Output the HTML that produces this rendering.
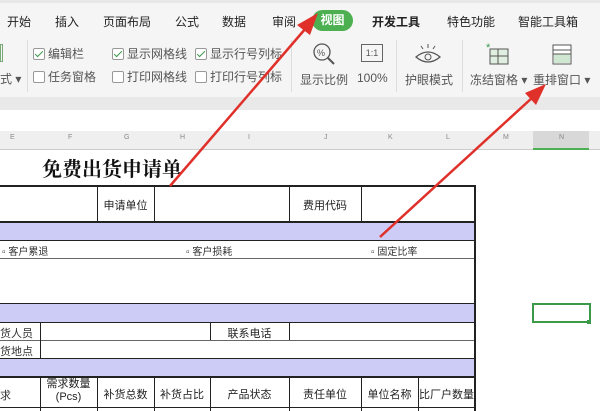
<!DOCTYPE html>
<html><head><meta charset="utf-8"><style>
*{margin:0;padding:0;box-sizing:border-box}
body{width:600px;height:411px;overflow:hidden;background:#fff;position:relative;font-family:"Liberation Sans","Noto Sans CJK SC",sans-serif;color:#333}
.a{position:absolute;white-space:nowrap}
.tab{position:absolute;top:13px;font-size:12px;color:#222}
.r{font-size:12px;color:#555}
.cb{display:inline-block;width:12px;height:12px;border:1px solid #999;border-radius:2px;vertical-align:-2px;margin-right:3px;background:#fff;position:relative}
.ck:after{content:"";position:absolute;left:3px;top:0px;width:3px;height:7px;border:solid #3a9a4a;border-width:0 1.5px 1.5px 0;transform:rotate(45deg)}
.h{position:absolute;background:#222}
.t{position:absolute;font-size:11px;color:#222;text-align:center}
.lav{position:absolute;left:0;width:475px;background:#ccccf6}
</style></head><body>
<div class="a" style="left:0;top:0;width:600px;height:3px;background:#e8e8e8"></div>
<div class="a" style="left:0;top:3px;width:600px;height:94px;background:#f5f5f5"></div>
<div class="tab" style="left:7px">开始</div>
<div class="tab" style="left:55px">插入</div>
<div class="tab" style="left:103px">页面布局</div>
<div class="tab" style="left:175px">公式</div>
<div class="tab" style="left:222px">数据</div>
<div class="tab" style="left:272px">审阅</div>
<div class="a" style="left:312px;top:10px;width:41px;height:21px;border-radius:11px;background:#4caf50;color:#fff;font-size:12px;text-align:center;line-height:21px;font-weight:bold">视图</div>
<div class="tab" style="left:372px;font-weight:bold">开发工具</div>
<div class="tab" style="left:447px">特色功能</div>
<div class="tab" style="left:518px">智能工具箱</div>
<div class="a" style="left:0;top:44px;width:3px;height:18px;border:1px solid #7a7"></div>
<div class="a r" style="left:0;top:70px">式 ▾</div>
<div class="a" style="left:27px;top:40px;width:1px;height:52px;background:#ddd"></div>
<div class="a r" style="left:33px;top:45px"><span class="cb ck"></span>编辑栏</div>
<div class="a r" style="left:33px;top:68px"><span class="cb"></span>任务窗格</div>
<div class="a r" style="left:112px;top:45px"><span class="cb ck"></span>显示网格线</div>
<div class="a r" style="left:112px;top:68px"><span class="cb"></span>打印网格线</div>
<div class="a r" style="left:195px;top:45px"><span class="cb ck"></span>显示行号列标</div>
<div class="a r" style="left:195px;top:68px"><span class="cb"></span>打印行号列标</div>
<div class="a" style="left:291px;top:40px;width:1px;height:52px;background:#ddd"></div>
<svg class="a" style="left:312px;top:42px" width="24" height="24"><circle cx="10" cy="10" r="8" fill="none" stroke="#555" stroke-width="1.3"/><line x1="16" y1="16" x2="22" y2="22" stroke="#555" stroke-width="2"/><text x="5" y="14" font-size="9" fill="#555">%</text></svg>
<div class="a r" style="left:300px;top:71px">显示比例</div>
<div class="a" style="left:361px;top:44px;width:22px;height:18px;border:1.3px solid #666;font-size:9px;text-align:center;line-height:16px;color:#555">1:1</div>
<div class="a r" style="left:357px;top:71px">100%</div>
<div class="a" style="left:396px;top:40px;width:1px;height:52px;background:#ddd"></div>
<svg class="a" style="left:414px;top:42px" width="28" height="24"><path d="M2 15 Q14 5 26 15 Q14 25 2 15Z" fill="none" stroke="#555" stroke-width="1.3"/><circle cx="14" cy="15" r="3" fill="none" stroke="#555"/><path d="M14 2v4M7 4l2 3M21 4l-2 3" stroke="#555"/></svg>
<div class="a r" style="left:405px;top:71px">护眼模式</div>
<div class="a" style="left:462px;top:40px;width:1px;height:52px;background:#ddd"></div>
<svg class="a" style="left:486px;top:42px" width="24" height="24"><rect x="4" y="7" width="18" height="15" fill="#dfeee0" stroke="#555"/><line x1="4" y1="14" x2="22" y2="14" stroke="#555"/><line x1="12" y1="7" x2="12" y2="22" stroke="#555"/><text x="0" y="9" font-size="11" fill="#3a9a4a">*</text></svg>
<div class="a r" style="left:470px;top:71px">冻结窗格 ▾</div>
<svg class="a" style="left:550px;top:42px" width="24" height="24"><rect x="3" y="3" width="18" height="19" fill="#fff" stroke="#555"/><rect x="4" y="12" width="16" height="9" fill="#cfe6d0"/><line x1="3" y1="8" x2="21" y2="8" stroke="#555"/><line x1="3" y1="12" x2="21" y2="12" stroke="#555"/></svg>
<div class="a r" style="left:533px;top:71px">重排窗口 ▾</div>
<div class="a" style="left:0;top:97px;width:600px;height:13px;background:#e9e9e9"></div>
<div class="a" style="left:0;top:131px;width:600px;height:19px;background:#efefef;border-bottom:1px solid #ccc"></div>
<div class="a" style="left:533px;top:131px;width:56px;height:19px;background:#d8d8d8;border-bottom:2px solid #4caf50"></div>
<div class="a" style="left:0;top:134px;width:600px;font-size:7px;color:#888">
<span class="a" style="left:10px">E</span><span class="a" style="left:68px">F</span><span class="a" style="left:124px">G</span><span class="a" style="left:180px">H</span><span class="a" style="left:248px">I</span><span class="a" style="left:324px">J</span><span class="a" style="left:388px">K</span><span class="a" style="left:446px">L</span><span class="a" style="left:503px">M</span><span class="a" style="left:559px">N</span></div>
<div class="a" style="left:42px;top:153px;font-family:'Liberation Serif','Noto Serif CJK SC',serif;font-size:20px;font-weight:bold;color:#111">免费出货申请单</div>
<div class="lav" style="top:222px;height:18px"></div>
<div class="lav" style="top:303px;height:19px"></div>
<div class="lav" style="top:358px;height:18px"></div>
<div class="h" style="left:0;top:185px;width:476px;height:2px"></div>
<div class="h" style="left:0;top:221px;width:476px;height:2px"></div>
<div class="h" style="left:0;top:240px;width:476px;height:1px"></div>
<div class="h" style="left:0;top:258px;width:476px;height:1px;background:#666"></div>
<div class="h" style="left:0;top:303px;width:476px;height:1px"></div>
<div class="h" style="left:0;top:322px;width:476px;height:1px"></div>
<div class="h" style="left:0;top:340px;width:476px;height:1px;background:#666"></div>
<div class="h" style="left:0;top:358px;width:476px;height:1px"></div>
<div class="h" style="left:0;top:376px;width:476px;height:2px"></div>
<div class="h" style="left:0;top:407px;width:476px;height:1px"></div>
<div class="h" style="left:474px;top:185px;width:2px;height:226px"></div>
<div class="h" style="left:97px;top:185px;width:1px;height:37px"></div>
<div class="h" style="left:154px;top:185px;width:1px;height:37px"></div>
<div class="h" style="left:289px;top:185px;width:1px;height:37px"></div>
<div class="h" style="left:361px;top:185px;width:1px;height:37px"></div>
<div class="h" style="left:40px;top:322px;width:1px;height:36px"></div>
<div class="h" style="left:210px;top:322px;width:1px;height:18px"></div>
<div class="h" style="left:289px;top:322px;width:1px;height:18px"></div>
<div class="h" style="left:40px;top:376px;width:1px;height:35px"></div>
<div class="h" style="left:97px;top:376px;width:1px;height:35px"></div>
<div class="h" style="left:154px;top:376px;width:1px;height:35px"></div>
<div class="h" style="left:210px;top:376px;width:1px;height:35px"></div>
<div class="h" style="left:289px;top:376px;width:1px;height:35px"></div>
<div class="h" style="left:361px;top:376px;width:1px;height:35px"></div>
<div class="h" style="left:418px;top:376px;width:1px;height:35px"></div>
<div class="t" style="left:97px;top:197px;width:57px">申请单位</div>
<div class="t" style="left:289px;top:197px;width:72px">费用代码</div>
<div class="a" style="left:2px;top:243px;font-size:10px">▫ 客户累退</div>
<div class="a" style="left:186px;top:243px;font-size:10px">▫ 客户损耗</div>
<div class="a" style="left:371px;top:243px;font-size:10px">▫ 固定比率</div>
<div class="a" style="left:0;top:325px;font-size:11px">货人员</div>
<div class="a" style="left:0;top:343px;font-size:11px">货地点</div>
<div class="t" style="left:210px;top:325px;width:79px">联系电话</div>
<div class="a" style="left:0;top:387px;font-size:11px">求</div>
<div class="t" style="left:40px;top:378px;width:57px;line-height:13px">需求数量<br>(Pcs)</div>
<div class="t" style="left:97px;top:386px;width:57px">补货总数</div>
<div class="t" style="left:154px;top:386px;width:56px">补货占比</div>
<div class="t" style="left:210px;top:386px;width:79px">产品状态</div>
<div class="t" style="left:289px;top:386px;width:72px">责任单位</div>
<div class="t" style="left:361px;top:386px;width:57px">单位名称</div>
<div class="t" style="left:418px;top:386px;width:57px">比厂户数量</div>
<div class="a" style="left:532px;top:303px;width:59px;height:20px;border:2px solid #3a9a4a"></div>
<div class="a" style="left:587px;top:320px;width:4px;height:4px;background:#3a9a4a"></div>
<svg class="a" style="left:0;top:0" width="600" height="411">
<line x1="170" y1="186" x2="306" y2="28" stroke="#e0302a" stroke-width="2.5"/>
<polygon points="318,13 297,25 310,35" fill="#e0302a"/>
<line x1="380" y1="237" x2="533" y2="97" stroke="#e0302a" stroke-width="2.5"/>
<polygon points="546,84 525,93 536,105" fill="#e0302a"/>
</svg>
</body></html>
